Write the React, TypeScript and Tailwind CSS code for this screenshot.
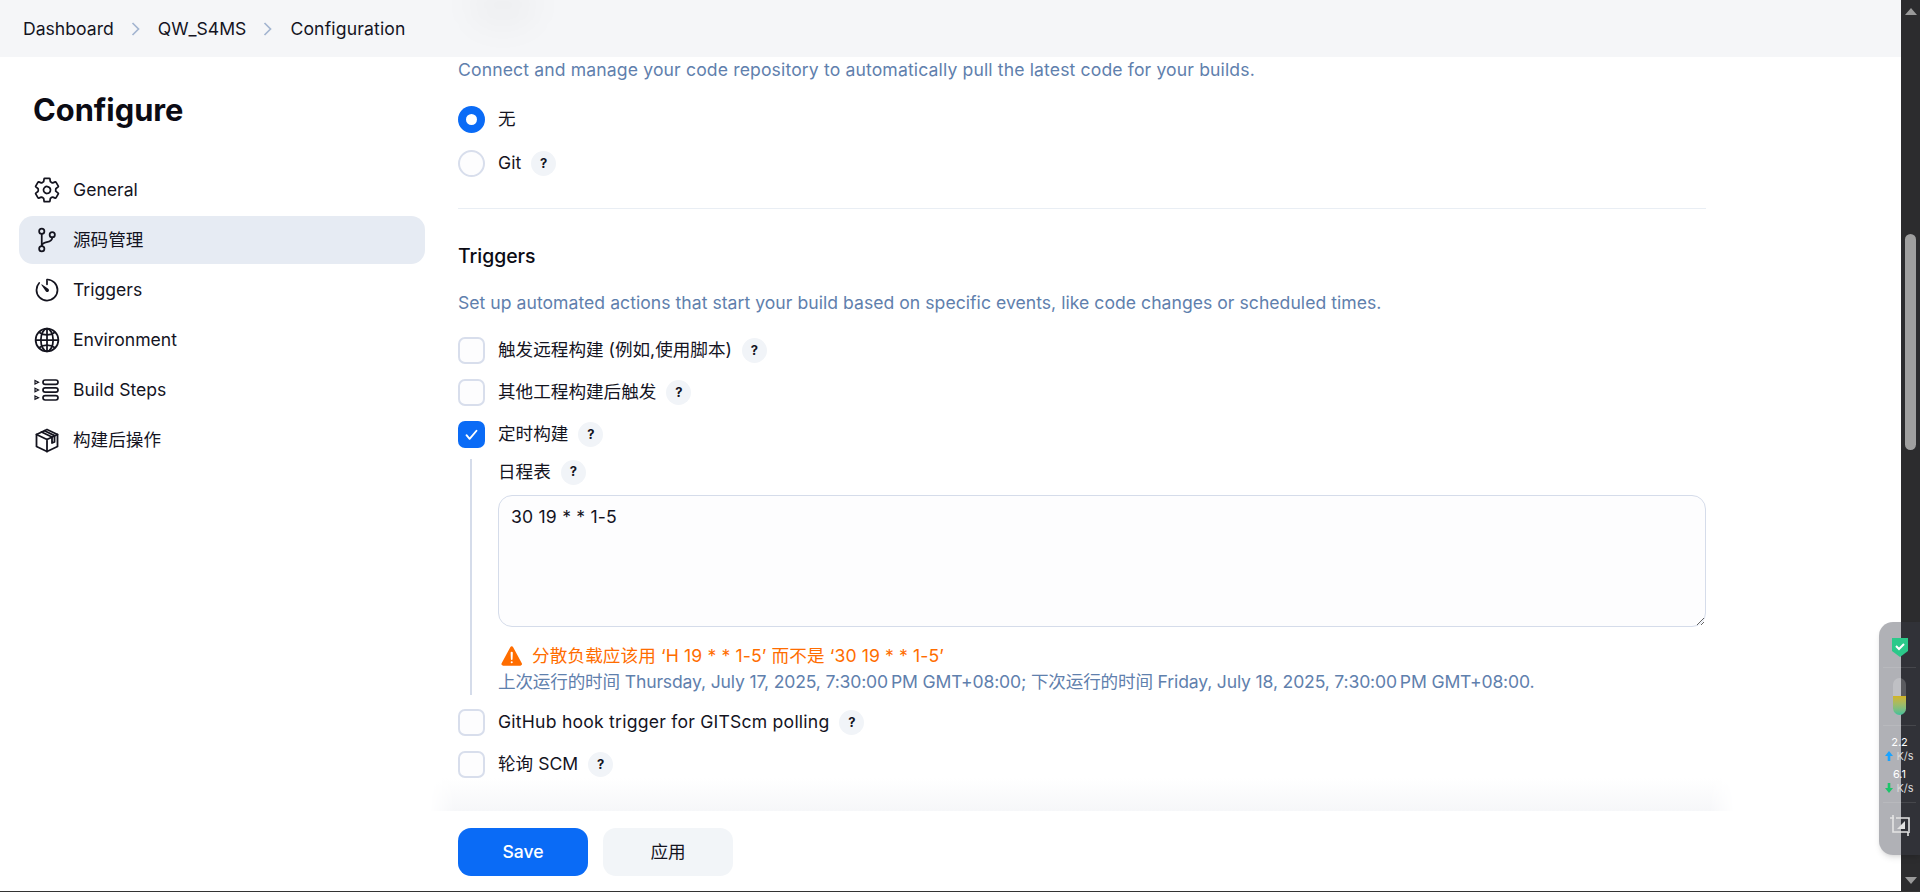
import React from "react";
import { IoSettingsOutline, IoGitBranchOutline, IoTimerOutline, IoGlobeOutline, IoWarning } from "react-icons/io5";

const Help = () => (
  <span className="ml-[10px] flex h-[25px] w-[25px] shrink-0 items-center justify-center rounded-full bg-[#f1f4f8] text-[13px] font-bold text-[#14141f]">?</span>
);

const Check = ({ label, checked, wide }: { label: string; checked?: boolean; wide?: boolean }) => (
  <div className="flex h-[27px] items-center">
    <span className={checked ? "flex h-[27px] w-[27px] shrink-0 items-center justify-center rounded-[7px] bg-[#0a6bf6]" : "h-[27px] w-[27px] shrink-0 rounded-[7px] border-2 border-[#d8deec] bg-[#fdfdfe]"}>
      {checked && (
        <svg width="15" height="15" viewBox="0 0 24 24" fill="none" stroke="white" strokeWidth="3" strokeLinecap="round" strokeLinejoin="round">
          <path d="M4 13l5 6L20 6" />
        </svg>
      )}
    </span>
    <span className={wide ? "ml-[13px] tracking-[0.22px] text-[#14141f]" : "ml-[13px] text-[#14141f]"}>{label}</span>
    <Help />
  </div>
);

const StepsIcon = () => (
  <svg width="25" height="22" viewBox="0 0 25 22" fill="none" stroke="#14141f" strokeWidth="1.7">
    <rect x="9" y="1" width="15" height="4.4" rx="2.2" />
    <rect x="9" y="8.8" width="15" height="4.4" rx="2.2" />
    <rect x="9" y="16.6" width="15" height="4.4" rx="2.2" />
    <path strokeWidth="1.2" d="M1 1.5l3.5 1.7L1 5zM1 9.3l3.5 1.7L1 12.7zM1 17l3.5 1.7L1 20.4z" />
  </svg>
);

const PackageIcon = () => (
  <svg width="24" height="25" viewBox="0 0 24 25" fill="none" stroke="#14141f" strokeWidth="1.8" strokeLinejoin="round" strokeLinecap="round">
    <path d="M12 1.5L22.5 6.5V18.5L12 23.5L1.5 18.5V6.5Z" />
    <path d="M1.5 6.5L12 11.5L22.5 6.5M12 11.5V23.5" />
    <path d="M6.5 4L17 9V15M9.5 2.8L19.5 7.6V14L17 15" />
  </svg>
);

const items: { icon: React.ReactNode; label: string; active?: boolean }[] = [
  { icon: <IoSettingsOutline size={28} />, label: "General" },
  { icon: <IoGitBranchOutline size={28} />, label: "源码管理", active: true },
  { icon: <IoTimerOutline size={28} />, label: "Triggers" },
  { icon: <IoGlobeOutline size={28} />, label: "Environment" },
  { icon: <StepsIcon />, label: "Build Steps" },
  { icon: <PackageIcon />, label: "构建后操作" },
];

const Chevron = () => (
  <svg width="10" height="14" viewBox="0 0 10 14" fill="none" stroke="#a3b5d0" strokeWidth="1.7" className="mx-[17px]">
    <path d="M1.5 1l6 6-6 6" />
  </svg>
);

export default function App() {
  return (
    <div className="relative flex h-[892px] w-full overflow-hidden bg-white text-[17.6px] text-[#14141f]" style={{ fontFamily: 'Inter, "Noto Sans CJK SC", sans-serif' }}>
      <div className="flex min-w-0 flex-1 flex-col">
        <header className="relative flex h-[57px] shrink-0 items-center overflow-hidden bg-[#f5f6f8] pl-[23px] pt-[1px]">
          <span className="absolute left-[468px] top-[-20px] h-[50px] w-[70px] rounded-full bg-black/[0.025] blur-[14px]" />
          <span>Dashboard</span>
          <Chevron />
          <span>QW_S4MS</span>
          <Chevron />
          <span className="tracking-[0.15px]">Configuration</span>
        </header>
        <div className="flex min-h-0 flex-1">
          <aside className="w-[458px] shrink-0 pl-[19px]">
            <h1 className="mt-[33px] h-[40px] pl-[14px] text-[30.8px] font-bold leading-[40px] text-[#0b0b14]">Configure</h1>
            <nav className="mt-[36px] flex w-[406px] flex-col gap-[2px]">
              {items.map((it) => (
                <div key={it.label} className={it.active ? "flex h-[48px] items-center rounded-[14px] bg-[#e6ebf3]" : "flex h-[48px] items-center rounded-[14px]"}>
                  <span className="flex w-[54px] items-center justify-center pl-[1px] text-[#14141f]">{it.icon}</span>
                  <span>{it.label}</span>
                </div>
              ))}
            </nav>
          </aside>
          <main className="flex w-[1248px] shrink-0 flex-col">
            <p className="flex h-[26px] items-center tracking-[0.13px] text-[#5f80ad]">Connect and manage your code repository to automatically pull the latest code for your builds.</p>
            <div className="mt-[23px] flex h-[27px] items-center">
              <span className="flex h-[27px] w-[27px] items-center justify-center rounded-full bg-[#0a6bf6]"><span className="h-[11px] w-[11px] rounded-full bg-white" /></span>
              <span className="ml-[13px]">无</span>
            </div>
            <div className="mt-[17px] flex h-[27px] items-center">
              <span className="h-[27px] w-[27px] rounded-full border-2 border-[#d8deec] bg-[#fdfdfe]" />
              <span className="ml-[13px]">Git</span>
              <Help />
            </div>
            <div className="mt-[31px] h-px bg-[#e9eef4]" />
            <h2 className="mt-[34px] h-[26px] text-[19.4px] font-medium leading-[26px] text-[#0b0b14]">Triggers</h2>
            <p className="mt-[21px] flex h-[26px] items-center tracking-[0.03px] text-[#5f80ad]">Set up automated actions that start your build based on specific events, like code changes or scheduled times.</p>
            <div className="mt-[21px] flex flex-col gap-[15px]">
              <Check label="触发远程构建 (例如,使用脚本)" />
              <Check label="其他工程构建后触发" />
              <Check label="定时构建" checked />
            </div>
            <div className="ml-[12px] mt-[11px] flex flex-col border-l-2 border-[#d5dcea] pl-[26px]">
              <div className="flex h-[25px] items-center pt-[1px]">
                <span>日程表</span>
                <Help />
              </div>
              <textarea
                readOnly
                defaultValue="30 19 * * 1-5"
                className="mt-[11px] h-[132px] w-full resize-y rounded-[14px] border border-[#d5dcea] bg-[#fdfdfe] px-[12px] py-[8px] text-[17.6px] tracking-[0.2px] outline-none"
              />
              <div className="mt-[16px] flex h-[26px] items-center whitespace-pre text-[#ff6d00]">
                <IoWarning size={26} className="ml-[1px] mr-[7px]" />
                <span className="tracking-[0.12px]">分散负载应该用 ‘H 19 * * 1-5’ 而不是 ‘30 19 * * 1-5’</span>
              </div>
              <div className="flex h-[26px] items-center whitespace-pre tracking-[-0.17px] text-[#5f80ad]">{"上次运行的时间 Thursday, July 17, 2025, 7:30:00\u202fPM GMT+08:00; 下次运行的时间 Friday, July 18, 2025, 7:30:00\u202fPM GMT+08:00."}</div>
            </div>
            <div className="mt-[14px] flex flex-col gap-[15px]">
              <Check label="GitHub hook trigger for GITScm polling" wide />
              <Check label="轮询 SCM" />
            </div>
            <div className="-mx-[28px] flex-1 bg-gradient-to-b from-white to-[#f6f7f9] [mask-image:linear-gradient(to_right,transparent,black_24px,black_calc(100%-24px),transparent)]" />
            <div className="flex h-[79px] shrink-0 items-start gap-[15px] pt-[17px]">
              <button className="h-[48px] w-[130px] rounded-[13px] bg-[#0a6bf6] font-medium text-white">Save</button>
              <button className="h-[48px] w-[130px] rounded-[13px] bg-[#f2f5f8]">应用</button>
            </div>
            <div className="h-[2px]" />
          </main>
        </div>
      </div>
      <div className="flex w-[19px] shrink-0 flex-col items-center bg-[#2c2c2e] pt-[8px]">
        <span className="h-0 w-0 border-x-[6.5px] border-b-[7px] border-x-transparent border-b-[#9a9a9a]" />
        <span className="mt-[219px] h-[216px] w-[11px] rounded-full bg-[#9f9f9f]" />
        <span className="mb-[8px] mt-auto h-0 w-0 border-x-[6.5px] border-t-[7px] border-x-transparent border-t-[#9a9a9a]" />
      </div>
      <div className="absolute bottom-0 left-0 h-px w-full bg-[#333]" />
      <div className="absolute left-[1879px] top-[622px] flex h-[233px] w-[41px] flex-col items-center rounded-l-[14px] bg-[#3a3c48]/40 text-white shadow-md">
        <svg width="16" height="19" viewBox="0 0 16 19" className="ml-[1px] mt-[16px]">
          <path d="M0 0h16v13l-8 6-8-6z" fill="#2bc98a" />
          <path d="M4 8l3 3 5-5" fill="none" stroke="white" strokeWidth="2" />
        </svg>
        <div className="mt-[10px] h-px w-[33px] bg-white/10" />
        <div className="mt-[10px] flex h-[37px] w-[13px] flex-col overflow-hidden rounded-full bg-white/20">
          <div className="mt-[18px] flex-1 bg-gradient-to-b from-[#d2b41e] to-[#3bc09a]" />
        </div>
        <div className="mt-[10px] h-px w-[33px] bg-white/10" />
        <div className="mt-[9px] flex flex-col items-center text-[11px] leading-[14px]">
          <span>2.2</span>
          <span className="flex items-center text-[#d8d8d8]">
            <svg width="8" height="10" viewBox="0 0 8 10" className="mr-[3px]"><path d="M4 0l4 5H5.3v5H2.7V5H0z" fill="#1aa3ff" /></svg>
            K/s
          </span>
          <span className="mt-[4px]">6.1</span>
          <span className="flex items-center text-[#d8d8d8]">
            <svg width="8" height="10" viewBox="0 0 8 10" className="mr-[3px]"><path d="M4 10l4-5H5.3V0H2.7v5H0z" fill="#1cc46a" /></svg>
            K/s
          </span>
        </div>
        <div className="mt-[7px] h-px w-[33px] bg-white/10" />
        <svg width="22" height="22" viewBox="0 0 22 22" fill="none" stroke="#e4e4e4" strokeWidth="1.6" className="mt-[12px]">
          <path d="M1 3h4M4 0v17h17M7 3h13v13" />
          <path d="M8 14l8-8v8z" fill="#e4e4e4" stroke="none" />
          <path d="M19 17v4" />
        </svg>
      </div>
    </div>
  );
}
